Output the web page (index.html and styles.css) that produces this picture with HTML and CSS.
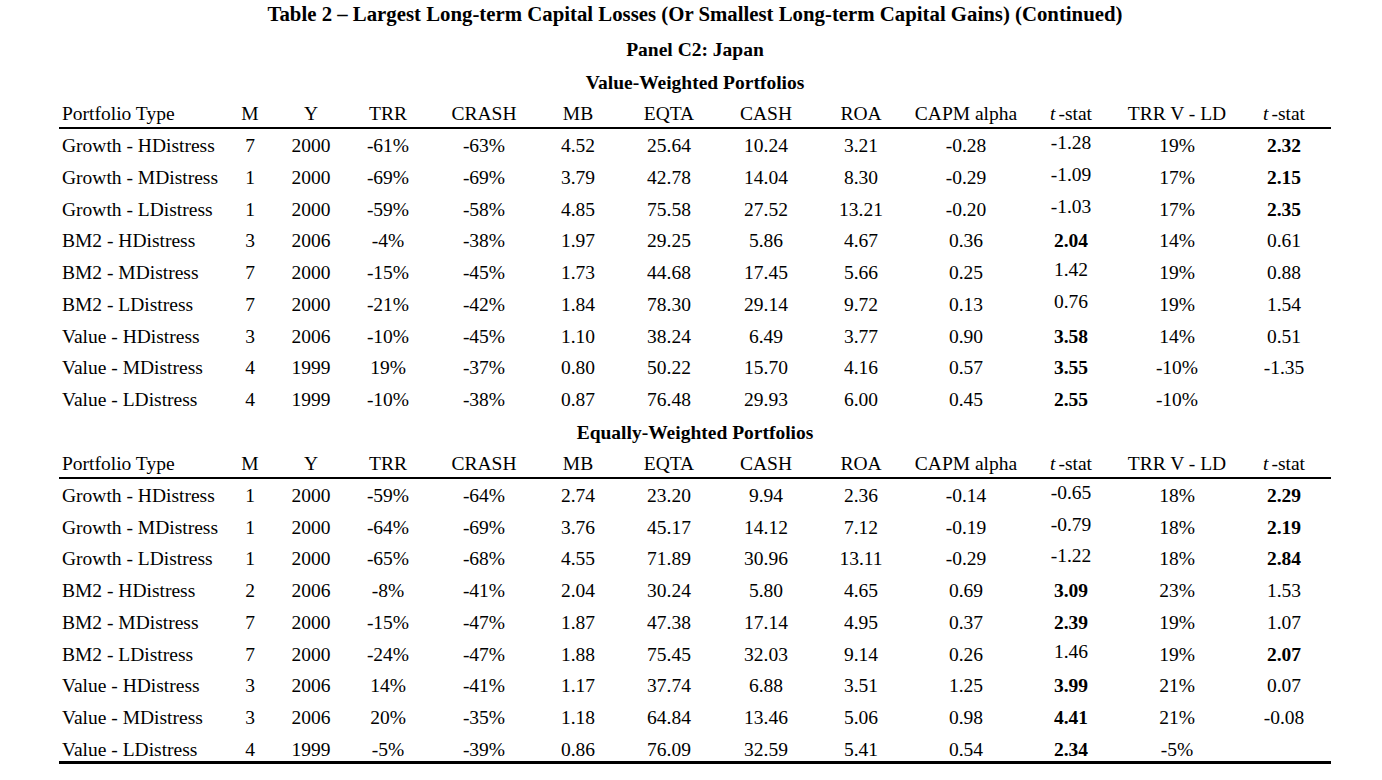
FILE: index.html
```html
<!DOCTYPE html>
<html lang="en">
<head>
<meta charset="utf-8">
<title>Table 2 – Panel C2: Japan</title>
<link rel="stylesheet" href="styles.css">
</head>
<body>
<div class="page">
  <div class="title">Table 2 – Largest Long-term Capital Losses (Or Smallest Long-term Capital Gains) (Continued)</div>
  <div class="panel">Panel C2: Japan</div>
  <div class="subtitle first">Value-Weighted Portfolios</div>
  <table class="data">
    <colgroup>
      <col class="c-name"><col class="c-m"><col class="c-y"><col class="c-trr"><col class="c-crash"><col class="c-mb"><col class="c-eqta"><col class="c-cash"><col class="c-roa"><col class="c-capm"><col class="c-t1"><col class="c-vld"><col class="c-t2">
    </colgroup>
    <thead>
      <tr><th class="name">Portfolio Type</th><th>M</th><th>Y</th><th>TRR</th><th>CRASH</th><th>MB</th><th>EQTA</th><th>CASH</th><th>ROA</th><th>CAPM alpha</th><th><i>t</i>-stat</th><th>TRR V - LD</th><th class="last"><i>t</i>-stat</th></tr>
    </thead>
    <tbody>
      <tr><td class="name">Growth - HDistress</td><td>7</td><td>2000</td><td>-61%</td><td>-63%</td><td>4.52</td><td>25.64</td><td>10.24</td><td>3.21</td><td>-0.28</td><td class="up">-1.28</td><td>19%</td><td class="last"><b>2.32</b></td></tr>
      <tr><td class="name">Growth - MDistress</td><td>1</td><td>2000</td><td>-69%</td><td>-69%</td><td>3.79</td><td>42.78</td><td>14.04</td><td>8.30</td><td>-0.29</td><td class="up">-1.09</td><td>17%</td><td class="last"><b>2.15</b></td></tr>
      <tr><td class="name">Growth - LDistress</td><td>1</td><td>2000</td><td>-59%</td><td>-58%</td><td>4.85</td><td>75.58</td><td>27.52</td><td>13.21</td><td>-0.20</td><td class="up">-1.03</td><td>17%</td><td class="last"><b>2.35</b></td></tr>
      <tr><td class="name">BM2 - HDistress</td><td>3</td><td>2006</td><td>-4%</td><td>-38%</td><td>1.97</td><td>29.25</td><td>5.86</td><td>4.67</td><td>0.36</td><td><b>2.04</b></td><td>14%</td><td class="last">0.61</td></tr>
      <tr><td class="name">BM2 - MDistress</td><td>7</td><td>2000</td><td>-15%</td><td>-45%</td><td>1.73</td><td>44.68</td><td>17.45</td><td>5.66</td><td>0.25</td><td class="up">1.42</td><td>19%</td><td class="last">0.88</td></tr>
      <tr><td class="name">BM2 - LDistress</td><td>7</td><td>2000</td><td>-21%</td><td>-42%</td><td>1.84</td><td>78.30</td><td>29.14</td><td>9.72</td><td>0.13</td><td class="up">0.76</td><td>19%</td><td class="last">1.54</td></tr>
      <tr><td class="name">Value - HDistress</td><td>3</td><td>2006</td><td>-10%</td><td>-45%</td><td>1.10</td><td>38.24</td><td>6.49</td><td>3.77</td><td>0.90</td><td><b>3.58</b></td><td>14%</td><td class="last">0.51</td></tr>
      <tr><td class="name">Value - MDistress</td><td>4</td><td>1999</td><td>19%</td><td>-37%</td><td>0.80</td><td>50.22</td><td>15.70</td><td>4.16</td><td>0.57</td><td><b>3.55</b></td><td>-10%</td><td class="last">-1.35</td></tr>
      <tr><td class="name">Value - LDistress</td><td>4</td><td>1999</td><td>-10%</td><td>-38%</td><td>0.87</td><td>76.48</td><td>29.93</td><td>6.00</td><td>0.45</td><td><b>2.55</b></td><td>-10%</td><td class="last"></td></tr>
    </tbody>
  </table>
  <div class="subtitle second">Equally-Weighted Portfolios</div>
  <table class="data closed">
    <colgroup>
      <col class="c-name"><col class="c-m"><col class="c-y"><col class="c-trr"><col class="c-crash"><col class="c-mb"><col class="c-eqta"><col class="c-cash"><col class="c-roa"><col class="c-capm"><col class="c-t1"><col class="c-vld"><col class="c-t2">
    </colgroup>
    <thead>
      <tr><th class="name">Portfolio Type</th><th>M</th><th>Y</th><th>TRR</th><th>CRASH</th><th>MB</th><th>EQTA</th><th>CASH</th><th>ROA</th><th>CAPM alpha</th><th><i>t</i>-stat</th><th>TRR V - LD</th><th class="last"><i>t</i>-stat</th></tr>
    </thead>
    <tbody>
      <tr><td class="name">Growth - HDistress</td><td>1</td><td>2000</td><td>-59%</td><td>-64%</td><td>2.74</td><td>23.20</td><td>9.94</td><td>2.36</td><td>-0.14</td><td class="up">-0.65</td><td>18%</td><td class="last"><b>2.29</b></td></tr>
      <tr><td class="name">Growth - MDistress</td><td>1</td><td>2000</td><td>-64%</td><td>-69%</td><td>3.76</td><td>45.17</td><td>14.12</td><td>7.12</td><td>-0.19</td><td class="up">-0.79</td><td>18%</td><td class="last"><b>2.19</b></td></tr>
      <tr><td class="name">Growth - LDistress</td><td>1</td><td>2000</td><td>-65%</td><td>-68%</td><td>4.55</td><td>71.89</td><td>30.96</td><td>13.11</td><td>-0.29</td><td class="up">-1.22</td><td>18%</td><td class="last"><b>2.84</b></td></tr>
      <tr><td class="name">BM2 - HDistress</td><td>2</td><td>2006</td><td>-8%</td><td>-41%</td><td>2.04</td><td>30.24</td><td>5.80</td><td>4.65</td><td>0.69</td><td><b>3.09</b></td><td>23%</td><td class="last">1.53</td></tr>
      <tr><td class="name">BM2 - MDistress</td><td>7</td><td>2000</td><td>-15%</td><td>-47%</td><td>1.87</td><td>47.38</td><td>17.14</td><td>4.95</td><td>0.37</td><td><b>2.39</b></td><td>19%</td><td class="last">1.07</td></tr>
      <tr><td class="name">BM2 - LDistress</td><td>7</td><td>2000</td><td>-24%</td><td>-47%</td><td>1.88</td><td>75.45</td><td>32.03</td><td>9.14</td><td>0.26</td><td class="up">1.46</td><td>19%</td><td class="last"><b>2.07</b></td></tr>
      <tr><td class="name">Value - HDistress</td><td>3</td><td>2006</td><td>14%</td><td>-41%</td><td>1.17</td><td>37.74</td><td>6.88</td><td>3.51</td><td>1.25</td><td><b>3.99</b></td><td>21%</td><td class="last">0.07</td></tr>
      <tr><td class="name">Value - MDistress</td><td>3</td><td>2006</td><td>20%</td><td>-35%</td><td>1.18</td><td>64.84</td><td>13.46</td><td>5.06</td><td>0.98</td><td><b>4.41</b></td><td>21%</td><td class="last">-0.08</td></tr>
      <tr><td class="name">Value - LDistress</td><td>4</td><td>1999</td><td>-5%</td><td>-39%</td><td>0.86</td><td>76.09</td><td>32.59</td><td>5.41</td><td>0.54</td><td><b>2.34</b></td><td>-5%</td><td class="last"></td></tr>
    </tbody>
  </table>
</div>
</body>
</html>
```

FILE: styles.css
```css
html, body {
  margin: 0;
  padding: 0;
  background: #ffffff;
}

body {
  color: #000000;
  font-family: "Liberation Serif", "Times New Roman", serif;
}

.page {
  width: 1272px;
  margin-left: 59px;
}

.title {
  font-weight: bold;
  font-size: 20.8px;
  line-height: 24px;
  text-align: center;
  margin-top: 2px;
}

.panel {
  font-weight: bold;
  font-size: 19.5px;
  line-height: 24px;
  text-align: center;
  margin-top: 12px;
}

.subtitle {
  font-weight: bold;
  font-size: 19.5px;
  line-height: 24px;
  text-align: center;
}

.subtitle.first {
  margin-top: 9px;
}

.subtitle.second {
  margin-top: 5px;
}

.data {
  border-collapse: collapse;
  table-layout: fixed;
  width: 1272px;
  font-size: 19.5px;
  margin-top: 6px;
}

.c-name { width: 166px; }
.c-m { width: 50px; }
.c-y { width: 72px; }
.c-trr { width: 82px; }
.c-crash { width: 110px; }
.c-mb { width: 78px; }
.c-eqta { width: 104px; }
.c-cash { width: 90px; }
.c-roa { width: 100px; }
.c-capm { width: 110px; }
.c-t1 { width: 100px; }
.c-vld { width: 112px; }
.c-t2 { width: 98px; }

.data th {
  font-weight: normal;
  line-height: 26px;
  padding: 0;
  border-bottom: 2px solid #000000;
  text-align: center;
  white-space: nowrap;
}

.data th i {
  margin-right: 3px;
}

.data td {
  padding: 0;
  line-height: 31.75px;
  text-align: center;
  vertical-align: top;
  white-space: nowrap;
}

.data .name {
  text-align: left;
  padding-left: 3px;
}

.data .last {
  padding-left: 4px;
}

.data tbody tr:first-child td {
  padding-top: 1px;
}

.data td.up {
  line-height: 26px;
}

.data b {
  font-weight: bold;
}

.closed tbody tr:last-child td {
  line-height: 22px;
  padding-top: 5px;
  border-bottom: 3px solid #000000;
}
```
